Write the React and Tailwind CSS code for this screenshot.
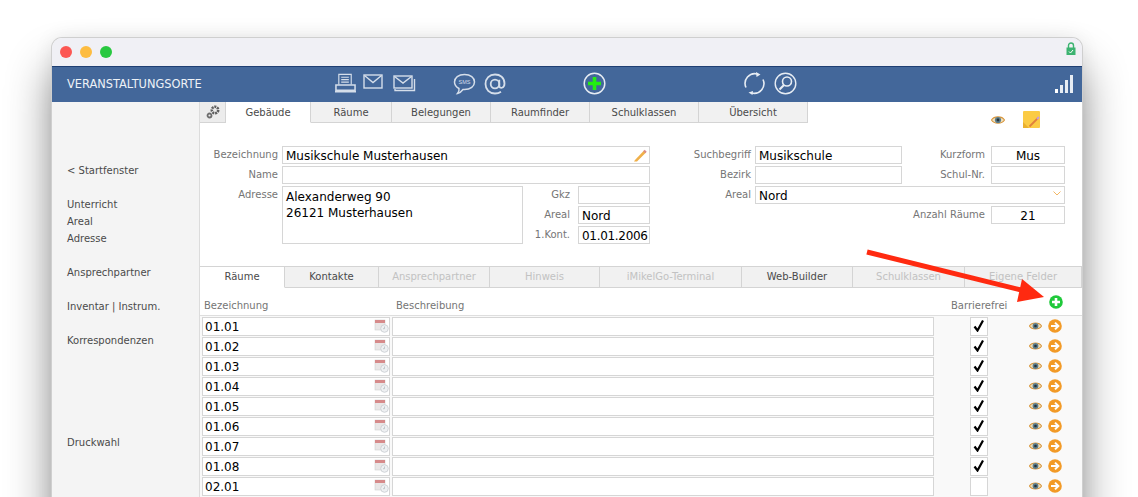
const font = { fontFamily: '"DejaVu Sans", Verdana, sans-serif' };

const upperTabs = [
  { label: 'Gebäude', w: 'w-[85px]', active: true },
  { label: 'Räume', w: 'w-[81px]' },
  { label: 'Belegungen', w: 'w-[99px]' },
  { label: 'Raumfinder', w: 'w-[99px]' },
  { label: 'Schulklassen', w: 'w-[109px]' },
  { label: 'Übersicht', w: 'w-[109px]' },
];

const lowerTabs = [
  { label: 'Räume', w: 'w-[85px]', active: true },
  { label: 'Kontakte', w: 'w-[94px]' },
  { label: 'Ansprechpartner', w: 'w-[111px]', off: true },
  { label: 'Hinweis', w: 'w-[110px]', off: true },
  { label: 'iMikelGo-Terminal', w: 'w-[142px]', off: true },
  { label: 'Web-Builder', w: 'w-[111px]' },
  { label: 'Schulklassen', w: 'w-[112px]', off: true },
  { label: 'Eigene Felder', w: 'flex-1', off: true },
];

const rooms = [
  { nr: '01.01', ok: true },
  { nr: '01.02', ok: true },
  { nr: '01.03', ok: true },
  { nr: '01.04', ok: true },
  { nr: '01.05', ok: true },
  { nr: '01.06', ok: true },
  { nr: '01.07', ok: true },
  { nr: '01.08', ok: true },
  { nr: '02.01', ok: false },
];

function Eye({ className }) {
  return (
    <svg viewBox="0 0 14 10" className={className}>
      <path d="M0.5 5C3 0.8 11 0.8 13.5 5C11 9.2 3 9.2 0.5 5Z" fill="#eee0bd" stroke="#d8953a" strokeWidth="1.1" />
      <circle cx="7" cy="5" r="3.1" fill="#5d7d8b" />
      <circle cx="7" cy="5" r="1.4" fill="#26343c" />
    </svg>
  );
}

function ArrowBadge() {
  return (
    <svg viewBox="0 0 14 14" className="w-[14px] h-[14px]">
      <circle cx="7" cy="7" r="6.8" fill="#f29a26" />
      <path d="M3 7H10M7 3.6L10.4 7L7 10.4" fill="none" stroke="#fff" strokeWidth="2" />
    </svg>
  );
}

function CalIcon() {
  return (
    <svg viewBox="0 0 15 14" className="w-[15px] h-[14px] shrink-0">
      <rect x="1" y="1" width="10" height="10" fill="#e9e6e6" stroke="#cfcfcf" strokeWidth="0.6" />
      <rect x="1" y="1" width="10" height="3" fill="#d68a8a" />
      <circle cx="10.5" cy="9.5" r="3.8" fill="#eef0f2" stroke="#c8ccd0" strokeWidth="0.8" />
      <path d="M10.5 7.5V9.7H9" fill="none" stroke="#b0b6ba" strokeWidth="0.7" />
    </svg>
  );
}

function Field({ w, h = 'h-[18px]', center, children, extra }) {
  return (
    <div className={`${w} ${h} shrink-0 bg-white border border-[#d6d6d6] flex items-center text-[12px] leading-none text-black ${center ? 'justify-center' : 'px-[3px]'}`}>
      <span className="flex-1 whitespace-nowrap pt-[2px]" style={center ? { textAlign: 'center' } : undefined}>{children}</span>
      {extra}
    </div>
  );
}

function Label({ w, children }) {
  return <div className={`${w} shrink-0 text-right text-[10px] leading-[16px] pt-[1px] text-[#757575] whitespace-nowrap`}>{children}</div>;
}

function HeaderIcons() {
  const c = '#d5deea';
  return (
    <div className="flex items-center h-full pb-[2px]">
      <svg viewBox="0 0 24 22" className="w-[23px] h-[21px] ml-[132px]">
        <path d="M5 12V1.5H18V12M7.5 4.5H15.5M7.5 7H15.5M7.5 9.5H15.5" fill="none" stroke={c} strokeWidth="1.2" />
        <path d="M2 12.5H22V18H2ZM1 19.5H23" fill="none" stroke={c} strokeWidth="1.6" />
      </svg>
      <svg viewBox="0 0 20 15" className="w-[20px] h-[15px] ml-[6px] -mt-[4px]">
        <rect x="1" y="1" width="18" height="13" fill="none" stroke={c} strokeWidth="1.4" />
        <path d="M1.5 1.5L10 8.5L18.5 1.5" fill="none" stroke={c} strokeWidth="1.4" />
      </svg>
      <svg viewBox="0 0 23 17" className="w-[23px] h-[17px] ml-[10px]">
        <path d="M2 14V15.5H21.5V4" fill="none" stroke={c} strokeWidth="1.4" />
        <rect x="1" y="1" width="18" height="12" fill="none" stroke={c} strokeWidth="1.4" />
        <path d="M1.5 1.5L10 8L18.5 1.5" fill="none" stroke={c} strokeWidth="1.4" />
      </svg>
      <svg viewBox="0 0 23 22" className="w-[23px] h-[22px] ml-[37px]">
        <path d="M11.5 1.5C17.5 1.5 21.5 4.8 21.5 9C21.5 13.2 17.5 16.5 11.5 16.5L10 16.5C8.5 18.5 7 20 4.5 20.5C6 18.5 6.3 17 6 15.5C3.2 14 1.5 11.8 1.5 9C1.5 4.8 5.5 1.5 11.5 1.5Z" fill="none" stroke={c} strokeWidth="1.5" />
        <text x="11.5" y="11" textAnchor="middle" fontSize="5.5" fill={c} fontFamily="Liberation Sans">SMS</text>
      </svg>
      <svg viewBox="0 0 22 22" className="w-[22px] h-[22px] ml-[8px]">
        <circle cx="11" cy="11" r="4.3" fill="none" stroke={c} strokeWidth="1.8" />
        <path d="M15.3 6.8V13C15.3 16 20.5 15.5 20.5 10.5C20.5 4.5 16 1.5 11 1.5C5.5 1.5 1.5 5.5 1.5 11C1.5 16.5 5.5 20.5 11 20.5C13.5 20.5 15.5 19.8 17 18.8" fill="none" stroke={c} strokeWidth="1.8" />
      </svg>
      <svg viewBox="0 0 23 23" className="w-[23px] h-[23px] ml-[77px]">
        <circle cx="11.5" cy="11.5" r="10.3" fill="none" stroke="#e6ecf3" strokeWidth="1.5" />
        <path d="M11.5 5V18M5 11.5H18" stroke="#22ee11" strokeWidth="3.6" />
      </svg>
      <svg viewBox="0 0 23 23" className="w-[23px] h-[23px] ml-[137px]">
        <path d="M3 15.5A9.8 9.8 0 0 1 14.5 2M20 7.5A9.8 9.8 0 0 1 8.5 21" fill="none" stroke="#e6ecf3" strokeWidth="1.6" />
        <path d="M13 0L17.5 2.5L13.5 5Z M10 19L5.5 20.5L9.5 23Z" fill="#e6ecf3" />
      </svg>
      <svg viewBox="0 0 23 23" className="w-[23px] h-[23px] ml-[8px]">
        <circle cx="11.5" cy="11.5" r="10.3" fill="none" stroke="#e6ecf3" strokeWidth="1.4" />
        <circle cx="13" cy="9.5" r="4.5" fill="none" stroke="#e6ecf3" strokeWidth="1.6" />
        <path d="M10 13L5.5 17.5" stroke="#e6ecf3" strokeWidth="2.2" />
      </svg>
      <svg viewBox="0 0 19 18" className="w-[19px] h-[18px] ml-auto mr-[8px]">
        <rect x="0" y="14" width="3" height="4" fill="#fff" />
        <rect x="5" y="10" width="3" height="8" fill="#e6ecf3" />
        <rect x="10" y="5" width="3" height="13" fill="#e6ecf3" />
        <rect x="15" y="0" width="3" height="18" fill="#e6ecf3" />
      </svg>
    </div>
  );
}

function Tab({ tab, pad }) {
  const base = 'h-[21px] flex items-center justify-center text-[10px] leading-none whitespace-nowrap border-b border-r border-[#d4d4d4]';
  const tone = tab.active
    ? 'bg-white border-b-white text-[#4a4a4a]'
    : tab.off
      ? 'bg-[#f1f1f1] text-[#c2c2c2]'
      : 'bg-[#f1f1f1] text-[#4a4a4a]';
  return <div className={`${tab.w} ${base} ${tone} ${pad}`}>{tab.label}</div>;
}

function RoomRow({ room }) {
  return (
    <div className="flex items-center h-[20px] pl-[2px]">
      <div className="w-[188px] h-[19px] bg-white border border-[#d6d6d6] flex items-center pl-[2px] pr-0 text-[12px] text-black leading-none">
        <span className="flex-1 pt-[2px]">{room.nr}</span>
        <CalIcon />
      </div>
      <div className="w-[542px] h-[19px] ml-[2px] bg-white border border-[#d6d6d6]"></div>
      <div className="w-[18px] h-[19px] ml-[36px] bg-white border border-[#d6d6d6] flex items-center justify-center">
        {room.ok && (
          <svg viewBox="0 0 12 12" className="w-[12px] h-[12px]">
            <path d="M1.5 6.5L4.5 10.5L10 0.5" fill="none" stroke="#000" strokeWidth="2.2" />
          </svg>
        )}
      </div>
      <Eye className="w-[13px] h-[10px] ml-[41px]" />
      <div className="ml-[6px]"><ArrowBadge /></div>
    </div>
  );
}

export default function App() {
  return (
    <div className="relative h-[497px] w-[1138px] overflow-hidden bg-white pt-[38px] pl-[52px]" style={font}>
      <div className="w-[1030px] h-[520px] rounded-t-[10px] bg-white overflow-hidden flex flex-col shadow-[0_0_0_1px_#cfcfcf,0_30px_45px_rgba(0,0,0,0.45),0_0_20px_rgba(0,0,0,0.08)]">
        {/* Titelleiste */}
        <div className="h-[28px] shrink-0 bg-[#f0f0f5] flex items-center px-[8px] gap-[8px]">
          <span className="w-[12px] h-[12px] rounded-full bg-[#fc5753]"></span>
          <span className="w-[12px] h-[12px] rounded-full bg-[#fdbc40]"></span>
          <span className="w-[12px] h-[12px] rounded-full bg-[#28c840]"></span>
          <svg viewBox="0 0 10 13" className="w-[10px] h-[13px] ml-auto -mr-[2px] mt-[-8px]">
            <path d="M2.5 6V3.5A2.5 2.5 0 0 1 7.5 3.5V6" fill="none" stroke="#3cb371" strokeWidth="1.4" />
            <rect x="0.5" y="5.5" width="9" height="7.5" fill="#3cb371" />
            <path d="M3 9.5L4.5 11L7 8" fill="none" stroke="#fff" strokeWidth="1" />
          </svg>
        </div>

        {/* Blaue Leiste */}
        <div className="h-[36px] shrink-0 bg-[#43679a] border-t border-[#1f3f73] flex items-center pl-[15px]">
          <div className="text-[11.4px] leading-none text-[#eef2f7] whitespace-nowrap w-[135px] shrink-0">VERANSTALTUNGSORTE</div>
          <div className="flex-1 h-full"><HeaderIcons /></div>
        </div>

        <div className="flex flex-1">
          {/* Seitenleiste */}
          <div className="w-[148px] shrink-0 bg-[#f4f4f4] border-r border-[#dcdcdc] pt-[60px] pl-[15px] text-[10px] leading-[17px] text-[#4a4a4a]">
            <div className="mb-[17px]">&lt; Startfenster</div>
            <div>Unterricht</div>
            <div>Areal</div>
            <div className="mb-[17px]">Adresse</div>
            <div className="mb-[17px]">Ansprechpartner</div>
            <div className="mb-[17px]">Inventar | Instrum.</div>
            <div className="mb-[85px]">Korrespondenzen</div>
            <div>Druckwahl</div>
          </div>

          <div className="flex-1 min-w-0">
            {/* Obere Reiter */}
            <div className="flex h-[21px]">
              <div className="w-[26px] h-[21px] bg-[#ececec] border-b border-r border-[#d4d4d4] flex items-center justify-center">
                <svg viewBox="0 0 14 14" className="w-[14px] h-[14px]">
                  <circle cx="9" cy="5" r="3.2" fill="none" stroke="#5e5e5e" strokeWidth="2.6" strokeDasharray="2 0.8" />
                  <circle cx="3.5" cy="10.5" r="2" fill="none" stroke="#6e6e6e" strokeWidth="1.8" />
                </svg>
              </div>
              {upperTabs.map((t) => <Tab key={t.label} tab={t} pad="pt-[2px]" />)}
              <Eye className="w-[14px] h-[10px] ml-[183px] mt-[13px]" />
              <svg viewBox="0 0 17 17" className="w-[17px] h-[17px] ml-[18px] mt-[9px] shrink-0">
                <rect x="0" y="0" width="17" height="17" rx="1" fill="#fbcb45" />
                <path d="M0 11L6 17H0Z" fill="#eab02e" />
                <path d="M6.5 15.5L15 7" stroke="#e0813c" strokeWidth="1.8" />
                <path d="M14 8L16 6" stroke="#c79be0" strokeWidth="1.8" />
              </svg>
            </div>

            {/* Formular */}
            <div className="flex h-[143px] pt-[23px] text-[12px]">
              <div className="w-[450px] shrink-0 flex flex-col gap-[2px]">
                <div className="flex gap-[4px]">
                  <Label w="w-[78px]">Bezeichnung</Label>
                  <Field w="w-[368px]" extra={
                    <svg viewBox="0 0 14 14" className="w-[14px] h-[14px] -mr-[1px]">
                      <path d="M2 12L11 2.5L13 4.5L4 13.5L1 13.5Z" fill="#f0b04a" />
                      <path d="M11 2.5L13 4.5" stroke="#d98a8a" strokeWidth="2" />
                    </svg>
                  }>Musikschule Musterhausen</Field>
                </div>
                <div className="flex gap-[4px]">
                  <Label w="w-[78px]">Name</Label>
                  <Field w="w-[368px]" />
                </div>
                <div className="flex gap-[4px]">
                  <Label w="w-[78px]">Adresse</Label>
                  <div className="w-[241px] h-[58px] shrink-0 bg-white border border-[#d6d6d6] px-[3px] pt-[2px] text-[12px] leading-[16px] text-black">
                    <div>Alexanderweg 90</div>
                    <div>26121 Musterhausen</div>
                  </div>
                  <div className="flex flex-col gap-[2px] ml-[2px]">
                    <div className="flex gap-[8px]">
                      <Label w="w-[41px]">Gkz</Label>
                      <Field w="w-[72px]" />
                    </div>
                    <div className="flex gap-[8px]">
                      <Label w="w-[41px]">Areal</Label>
                      <Field w="w-[72px]">Nord</Field>
                    </div>
                    <div className="flex gap-[8px]">
                      <Label w="w-[41px]">1.Kont.</Label>
                      <Field w="w-[72px]"><span className="tracking-[-0.3px]">01.01.2006</span></Field>
                    </div>
                  </div>
                </div>
              </div>

              <div className="w-[405px] ml-[10px] shrink-0 flex flex-col gap-[2px]">
                <div className="flex">
                  <Label w="w-[91px]">Suchbegriff</Label>
                  <div className="ml-[4px]"><Field w="w-[147px]">Musikschule</Field></div>
                  <Label w="w-[83px]">Kurzform</Label>
                  <div className="ml-[6px]"><Field w="w-[74px]" center>Mus</Field></div>
                </div>
                <div className="flex">
                  <Label w="w-[91px]">Bezirk</Label>
                  <div className="ml-[4px]"><Field w="w-[147px]" /></div>
                  <Label w="w-[83px]">Schul-Nr.</Label>
                  <div className="ml-[6px]"><Field w="w-[74px]" /></div>
                </div>
                <div className="flex">
                  <Label w="w-[91px]">Areal</Label>
                  <div className="ml-[4px]">
                    <Field w="w-[310px]" extra={
                      <svg viewBox="0 0 8 5" className="w-[8px] h-[5px] mb-[4px]">
                        <path d="M0.5 0.5L4 4L7.5 0.5" fill="none" stroke="#f2b765" strokeWidth="1" />
                      </svg>
                    }>Nord</Field>
                  </div>
                </div>
                <div className="flex">
                  <Label w="w-[325px]">Anzahl Räume</Label>
                  <div className="ml-[6px]"><Field w="w-[74px]" center>21</Field></div>
                </div>
              </div>
            </div>

            {/* Untere Reiter */}
            <div className="flex border-t border-[#d4d4d4] h-[21px]">
              {lowerTabs.map((t) => <Tab key={t.label + t.w} tab={t} pad="pb-[1px]" />)}
            </div>

            {/* Tabelle */}
            <div className="flex items-end h-[29px] pb-[4px] border-b border-[#dedede] text-[10px] leading-none text-[#757575]">
              <div className="w-[192px] ml-[4px]">Bezeichnung</div>
              <div className="w-[555px]">Beschreibung</div>
              <div className="w-[98px] whitespace-nowrap">Barrierefrei</div>
              <svg viewBox="0 0 14 14" className="w-[14px] h-[14px] mb-[2px] shrink-0">
                <circle cx="7" cy="7" r="6.8" fill="#1fc93a" />
                <path d="M7 3V11M3 7H11" stroke="#fff" strokeWidth="2.6" />
              </svg>
            </div>
            <div className="bg-[#f9f9f9] h-[200px]">
              {rooms.map((r) => <RoomRow key={r.nr} room={r} />)}
            </div>
          </div>
        </div>
      </div>

      {/* roter Pfeil */}
      <svg viewBox="0 0 1138 497" className="absolute inset-0 w-[1138px] h-[497px] pointer-events-none">
        <path d="M867 252L1025 291" stroke="#ff2a10" strokeWidth="5" fill="none" />
        <path d="M1044 297L1022 279L1017 302Z" fill="#ff2a10" />
      </svg>
    </div>
  );
}
